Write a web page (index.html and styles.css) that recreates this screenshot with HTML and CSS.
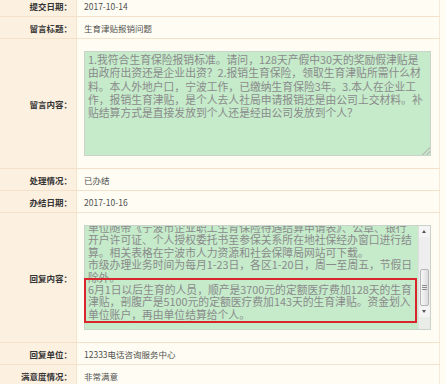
FILE: index.html
```html
<!DOCTYPE html>
<html lang="zh-CN">
<head>
    <meta charset="UTF-8">
    <title>留言详情</title>
    <link rel="stylesheet" href="styles.css">
</head>
<body>

    <table class="detail">
        <tr class="row-short">
            <td class="label">提交日期：</td>
            <td class="value">2017-10-14</td>
        </tr>
        <tr class="row-short">
            <td class="label">留言标题：</td>
            <td class="value">生育津贴报销问题</td>
        </tr>
        <tr>
            <td class="label">留言内容：</td>
            <td class="value box-cell">
                <div class="box">
                    <div class="box-text">1.我符合生育保险报销标准。请问，128天产假中30天的奖励假津贴是<br>由政府出资还是企业出资？2.报销生育保险，领取生育津贴所需什么材<br>料。本人外地户口，宁波工作，已缴纳生育保险3年。3.本人在企业工<br>作，报销生育津贴，是个人去人社局申请报销还是由公司上交材料。补<br>贴结算方式是直接发放到个人还是经由公司发放到个人？</div>
                    <span class="grip"></span>
                </div>
            </td>
        </tr>
        <tr class="row-short">
            <td class="label">处理情况：</td>
            <td class="value">已办结</td>
        </tr>
        <tr class="row-short">
            <td class="label">办结日期：</td>
            <td class="value">2017-10-16</td>
        </tr>
        <tr>
            <td class="label">回复内容：</td>
            <td class="value box-cell">
                <div class="box reply">
                    <div class="reply-view">
                        <div class="reply-text">单位随带《宁波市企业职工生育保险待遇结算申请表》、公章、银行<br>开户许可证、个人授权委托书至参保关系所在地社保经办窗口进行结<br>算。相关表格在宁波市人力资源和社会保障局网站可下载。<br>市级办理业务时间为每月1-23日，各区1-20日，周一至周五，节假日<br>除外。<br>6月1日以后生育的人员，顺产是3700元的定额医疗费加128天的生育<br>津贴，剖腹产是5100元的定额医疗费加143天的生育津贴。资金划入<br>单位账户，再由单位结算给个人。</div>
                    </div>
                    <div class="scrollbar">
                        <span class="arrow up"></span>
                        <span class="track"></span>
                        <span class="thumb"><i></i><i></i><i></i></span>
                        <span class="arrow down"></span>
                        <span class="corner"></span>
                    </div>
                    <!-- red annotation frame -->
                    <div class="highlight"></div>
                </div>
            </td>
        </tr>
        <tr class="row-short">
            <td class="label">回复单位：</td>
            <td class="value">12333电话咨询服务中心</td>
        </tr>
        <tr class="row-short">
            <td class="label">满意度情况：</td>
            <td class="value">非常满意</td>
        </tr>
    </table>

</body>
</html>
```

FILE: styles.css
```css
body {
    margin: 0;
    background-color: #fffdf3;
    font-family: "Noto Sans CJK SC", "Noto Sans", sans-serif;
    overflow: hidden;
}

.detail {
    width: 440px;
    margin-top: -5px;
    border-collapse: collapse;
    border-right: 1px solid #f3eadb;
}

.detail td {
    padding: 0;
    border-bottom: 1px solid #f3e1ca;
    font-size: 8.5px;
    vertical-align: middle;
}

.row-short td {
    height: 21px;
}

.label {
    width: 72px;
    padding-right: 4px !important;
    background-color: #fcf0e0;
    border-right: 1px solid #f4e3cd;
    text-align: right;
    font-weight: bold;
    color: #353535;
}

.value {
    padding-left: 7px !important;
    background-color: #fffdf3;
    color: #505050;
}

.box-cell {
    padding-top: 12px !important;
    padding-bottom: 12px !important;
}

/* Green text boxes */
.box {
    position: relative;
    width: 345px;
    height: 103px;
    background-color: #c5ebcb;
    border: 1px solid #c9d3c9;
    font-size: 10.8px;
    color: #8a8a8a;
}

.box-text {
    padding: 1px 0 0 3px;
    line-height: 13.3px;
    white-space: nowrap;
}

.grip {
    position: absolute;
    right: 0;
    bottom: 0;
    width: 8px;
    height: 8px;
    background: linear-gradient(135deg, transparent 50%, #b8c4b8 50%, #b8c4b8 60%, transparent 60%, transparent 75%, #b8c4b8 75%, #b8c4b8 85%, transparent 85%);
}

.reply {
    display: flex;
}

.reply-view {
    flex: 1;
    overflow: hidden;
}

.reply-text {
    margin-top: -5px;
    padding-left: 3px;
    line-height: 12.4px;
    white-space: nowrap;
}

/* Scrollbar drawn like the old Windows style */
.scrollbar {
    width: 11px;
    display: flex;
    flex-direction: column;
    background-color: #eeeeee;
    border-left: 1px solid #e0e0e0;
}

.arrow {
    height: 11px;
    position: relative;
    background-color: #f4f4f4;
}

.arrow::after {
    content: "";
    position: absolute;
    left: 3px;
    top: 4px;
    border-left: 2.5px solid transparent;
    border-right: 2.5px solid transparent;
}

.arrow.up::after {
    border-bottom: 3px solid #555;
}

.arrow.down::after {
    border-top: 3px solid #555;
}

.track {
    height: 32px;
}

.thumb {
    height: 35px;
    margin: 0 1px;
    background: linear-gradient(to right, #f7f7f7, #dcdcdc);
    border: 1px solid #b5b5b5;
    border-radius: 2px;
    display: flex;
    flex-direction: column;
    align-items: center;
    justify-content: center;
    gap: 1px;
}

.thumb i {
    display: block;
    width: 5px;
    height: 1px;
    background-color: #8c8c8c;
}

.corner {
    flex: 1;
    background-color: #e8ede8;
}

.highlight {
    position: absolute;
    left: -1px;
    top: 52px;
    width: 329px;
    height: 41px;
    border: 2px solid #d8262c;
}
```
